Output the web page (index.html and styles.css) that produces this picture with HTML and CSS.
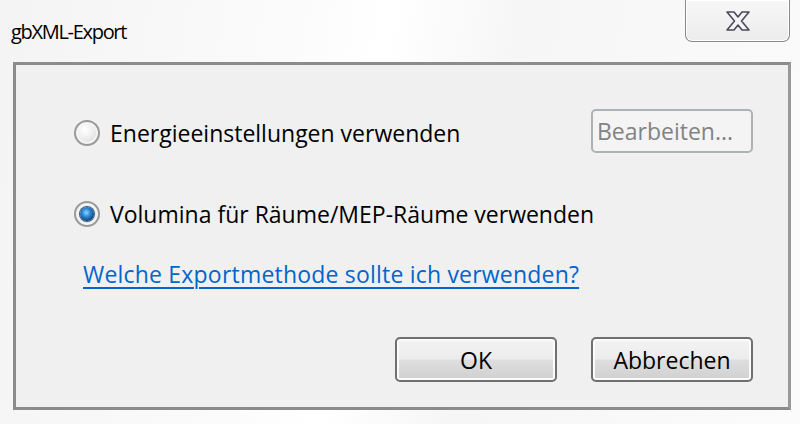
FILE: index.html
```html
<!DOCTYPE html>
<html lang="de">
<head>
<meta charset="utf-8">
<title>gbXML-Export</title>
<link rel="stylesheet" href="styles.css">
</head>
<body>
<div class="window">
  <div class="titlebar">
    <div class="title">gbXML-Export</div>
    <div class="close">
      <svg width="26" height="22" viewBox="0 0 26 22">
        <path d="M2 2 H9 L13 7 L17 2 H24 L16.5 11 L24 20 H17 L13 15 L9 20 H2 L9.5 11 Z" fill="#f4f4f6" stroke="#4a4a5a" stroke-width="1.6" stroke-linejoin="round"/>
      </svg>
    </div>
  </div>
  <div class="panel">
    <div class="row row1">
      <label class="option">
        <span class="radio"></span>
        <span class="label">Energieeinstellungen verwenden</span>
      </label>
      <div class="btn disabled">Bearbeiten...</div>
    </div>
    <div class="row row2">
      <label class="option">
        <span class="radio checked"><span class="dot"></span></span>
        <span class="label">Volumina für Räume/MEP-Räume verwenden</span>
      </label>
    </div>
    <div class="row row3">
      <a class="link" href="#">Welche Exportmethode sollte ich verwenden?</a>
    </div>
    <div class="actions">
      <div class="btn">OK</div>
      <div class="btn">Abbrechen</div>
    </div>
  </div>
</div>
</body>
</html>
```

FILE: styles.css
```css
html, body {
  margin: 0;
  padding: 0;
}
body {
  width: 800px;
  height: 424px;
  overflow: hidden;
  font-family: "Open Sans", "Noto Sans", sans-serif;
  background: linear-gradient(100deg, #f4f4f4 0%, #fafafa 30%, #ffffff 45%, #f6f6f6 60%, #fbfbfb 100%);
}
.window {
  display: flex;
  flex-direction: column;
  height: 424px;
}
.titlebar {
  display: flex;
  justify-content: space-between;
  align-items: flex-start;
  height: 62px;
}
.title {
  margin-left: 11px;
  margin-top: 18px;
  font-size: 20px;
  color: #000;
  letter-spacing: -1.3px;
}
.close {
  width: 105px;
  height: 42px;
  margin-right: 10px;
  border: 1.5px solid #8a8a8a;
  border-top: none;
  border-radius: 0 0 7px 7px;
  background: linear-gradient(#f7f7f7, #ececec);
  box-shadow: inset 0 0 0 1px #ffffff;
  display: flex;
  align-items: center;
  justify-content: center;
  box-sizing: border-box;
}
.panel {
  margin-left: 13px;
  width: 778px;
  height: 348px;
  border: 3px solid #8c8c8c;
  border-right-color: #999;
  background: #f0f0f0;
  box-sizing: border-box;
  padding: 44px 35px 0 58px;
  display: flex;
  flex-direction: column;
}
.row {
  display: flex;
  align-items: center;
}
.row1 {
  height: 44px;
  justify-content: space-between;
}
.row2 {
  height: 30px;
  margin-top: 44px;
}
.row3 {
  height: 30px;
  margin-top: 32px;
  padding-left: 9px;
}
.option {
  display: flex;
  align-items: center;
  gap: 10px;
  margin-top: 3px;
}
.radio {
  width: 26px;
  height: 26px;
  box-sizing: border-box;
  border-radius: 50%;
  border: 2px solid #9a9a9a;
  background: radial-gradient(circle at 40% 35%, #ffffff 0%, #f0f0f0 40%, #cfcfcf 100%);
  box-shadow: inset 0 0 0 2px #f4f4f4;
  display: flex;
  align-items: center;
  justify-content: center;
}
.radio.checked {
  background: radial-gradient(circle at 40% 35%, #ffffff 0%, #eaeaea 60%, #d0d0d0 100%);
}
.dot {
  width: 14px;
  height: 14px;
  border-radius: 50%;
  background: radial-gradient(circle at 45% 40%, #8fd3ff 0%, #2f8ad8 35%, #0b3f7a 75%, #173552 100%);
  box-shadow: 0 0 0 1px #3c5a7a;
}
.label {
  font-size: 23px;
  color: #000;
}
.link {
  font-size: 23px;
  color: #0066cc;
  text-decoration: underline;
  text-decoration-thickness: 2px;
  text-underline-offset: 4px;
  letter-spacing: 0.2px;
}
.btn {
  width: 162px;
  height: 45px;
  box-sizing: border-box;
  border: 2px solid #707070;
  border-radius: 5px;
  background: linear-gradient(#f3f3f3 0%, #ececec 48%, #dedede 52%, #d0d0d0 100%);
  box-shadow: inset 0 0 0 2px #fbfbfb;
  display: flex;
  align-items: center;
  justify-content: center;
  font-size: 23px;
  color: #000;
}
.btn.disabled {
  height: 44px;
  border-color: #adb2b5;
  background: #f4f4f4;
  box-shadow: none;
  color: #838383;
  justify-content: flex-start;
  padding-left: 4px;
}
.actions {
  display: flex;
  justify-content: flex-end;
  gap: 34px;
  margin-top: 48px;
}
```
